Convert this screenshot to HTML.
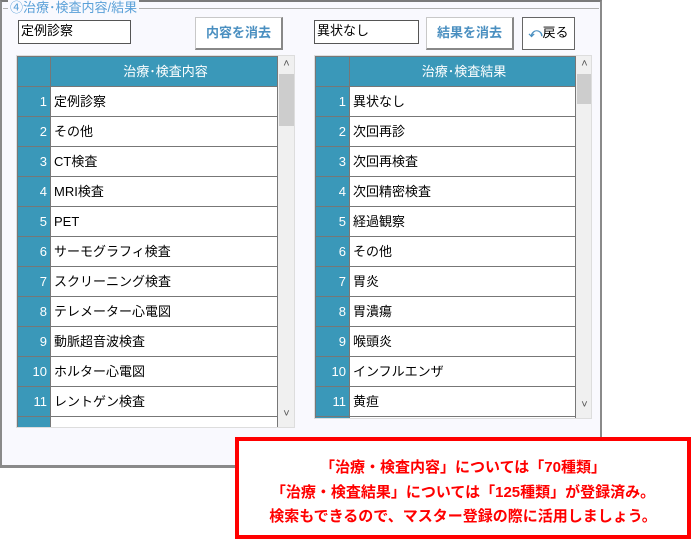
<!DOCTYPE html>
<html><head><meta charset="utf-8"><style>
*{box-sizing:border-box;margin:0;padding:0}
body{width:691px;height:539px;background:#fff;position:relative;overflow:hidden;font-family:"Liberation Sans","Noto Sans CJK JP",sans-serif}
.abs{position:absolute}
.win{left:0;top:0;width:602px;height:468px;background:#f9f9fe;border-left:2px solid #8a8a8a;border-right:2px solid #8a8a8a;border-bottom:3px solid #8a8a8a;border-top:2px solid #7a7a7a}
.gline{height:1px;background:#b0b0b0}
.title{left:8px;top:0px;font-size:13px;color:#5aa0d8;background:#f9f9fe;padding:0 2px;line-height:15px}
.tb{background:#fff;border:1px solid #555;font-size:13px;line-height:20px;padding-left:2px;color:#000}
.btn{background:#fff;border:1px solid #c8c8c8;border-right:2px solid #888;border-bottom:2px solid #888;font-size:13px;color:#4a8fc0;font-weight:bold;text-align:center;line-height:29px}
.grid{border:1px solid #ddd;background:#eee;overflow:hidden}
.row{position:absolute;left:0;height:30px;background:#777}
.num{position:absolute;left:0;top:0;height:29px;background:#3a98b9;color:#fff;font-size:13px;text-align:right;padding-right:3px;line-height:30px}
.cell{position:absolute;top:0;height:29px;background:#fff;font-size:13px;line-height:30px;padding-left:3px;color:#000}
.hdr{background:#3a98b9;color:#fff;text-align:center}
.sb{position:absolute;top:0;width:17px;background:#f0f0f0}
.red{left:235px;top:437px;width:456px;height:102px;border:4px solid #f00;background:#fff;color:#f00;font-weight:bold;font-size:15px;line-height:24.5px;text-align:center;padding-top:15px}
</style></head><body>
<div class="abs win"></div>
<div class="abs gline" style="left:3px;top:8px;width:596px"></div>
<div class="abs title">④治療･検査内容/結果</div>
<div class="abs tb" style="left:18px;top:20px;width:113px;height:24px">定例診察</div>
<div class="abs btn" style="left:195px;top:17px;width:88px;height:33px">内容を消去</div>
<div class="abs tb" style="left:314px;top:20px;width:105px;height:24px">異状なし</div>
<div class="abs btn" style="left:426px;top:17px;width:88px;height:33px">結果を消去</div>
<div class="abs btn" style="left:522px;top:17px;width:53px;height:33px;color:#000;font-weight:normal;border:1px solid #666"><span style="color:#4a8fc0;font-weight:bold">⤺</span>戻る</div>

<div class="abs grid" style="left:16px;top:55px;width:279px;height:373px">
 <div style="position:absolute;left:0;top:0;width:261px;height:372px;border-left:1px solid #777;border-top:1px solid #777;border-right:1px solid #777;overflow:hidden;background:#777" id="L"></div>
 <div class="sb" style="left:261px;height:372px"><div style="position:absolute;left:1px;top:18px;width:15px;height:52px;background:#cdcdcd"></div><div style="position:absolute;top:2px;width:17px;text-align:center;font-size:11px;color:#555">˄</div><div style="position:absolute;top:352px;width:17px;text-align:center;font-size:11px;color:#555">˅</div></div>
</div>
<div class="abs grid" style="left:314px;top:55px;width:278px;height:364px">
 <div style="position:absolute;left:0;top:0;width:261px;height:363px;border-left:1px solid #777;border-top:1px solid #777;border-right:1px solid #777;overflow:hidden;background:#777" id="R"></div>
 <div class="sb" style="left:261px;height:363px"><div style="position:absolute;left:1px;top:18px;width:15px;height:30px;background:#cdcdcd"></div><div style="position:absolute;top:2px;width:17px;text-align:center;font-size:11px;color:#555">˄</div><div style="position:absolute;top:343px;width:17px;text-align:center;font-size:11px;color:#555">˅</div></div>
</div>

<div class="abs red">「治療・検査内容」については「70種類」<br>「治療・検査結果」については「125種類」が登録済み。<br>検索もできるので、マスター登録の際に活用しましょう。</div>

<script>
function build(id,nw,hdr,items){
 var el=document.getElementById(id),h='',W=259;
 h+='<div class="row" style="top:0;width:'+W+'px"><div class="num" style="width:'+nw+'px"></div><div class="cell hdr" style="left:'+(nw+1)+'px;width:'+(W-nw-1)+'px">'+hdr+'</div></div>';
 for(var i=0;i<12;i++){
  h+='<div class="row" style="top:'+(30*(i+1))+'px;width:'+W+'px"><div class="num" style="width:'+nw+'px">'+(i<11?i+1:'')+'</div><div class="cell" style="left:'+(nw+1)+'px;width:'+(W-nw-1)+'px">'+(items[i]||'')+'</div></div>';
 }
 el.innerHTML=h;
}
build('L',32,'治療･検査内容',['定例診察','その他','CT検査','MRI検査','PET','サーモグラフィ検査','スクリーニング検査','テレメーター心電図','動脈超音波検査','ホルター心電図','レントゲン検査','']);
build('R',33,'治療･検査結果',['異状なし','次回再診','次回再検査','次回精密検査','経過観察','その他','胃炎','胃潰瘍','喉頭炎','インフルエンザ','黄疸','']);
</script>
</body></html>
